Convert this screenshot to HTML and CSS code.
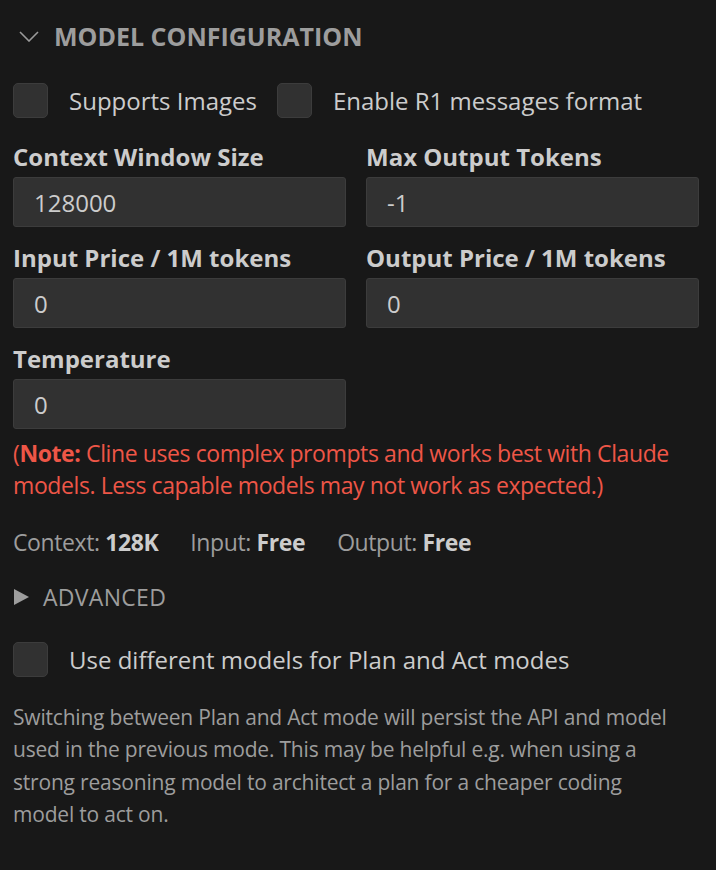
FILE: index.html
```html
<!DOCTYPE html>
<html lang="en">

<head>
    <meta charset="UTF-8">
    <meta name="viewport" content="width=device-width, initial-scale=1.0">
    <title>Model Configuration</title>
    <link rel="stylesheet" href="styles.css">
</head>

<body>
    <div class="panel">
        <div class="section-header">
            <svg class="chevron" width="20" height="11" viewBox="0 0 20 11">
                <path d="M1 1 L10 10 L19 1" fill="none" stroke="#9a9a9a" stroke-width="1.6" />
            </svg>
            <span>MODEL CONFIGURATION</span>
        </div>

        <div class="check-row">
            <label class="check"><span class="box"></span>Supports Images</label>
            <label class="check"><span class="box"></span>Enable R1 messages format</label>
        </div>

        <div class="field-grid">
            <div class="field">
                <div class="field-label">Context Window Size</div>
                <div class="input">128000</div>
            </div>
            <div class="field">
                <div class="field-label">Max Output Tokens</div>
                <div class="input">-1</div>
            </div>
            <div class="field">
                <div class="field-label">Input Price / 1M tokens</div>
                <div class="input">0</div>
            </div>
            <div class="field">
                <div class="field-label">Output Price / 1M tokens</div>
                <div class="input">0</div>
            </div>
            <div class="field">
                <div class="field-label">Temperature</div>
                <div class="input">0</div>
            </div>
        </div>

        <p class="note">(<b>Note:</b> Cline uses complex prompts and works best with Claude models. Less capable models may not work as expected.)</p>

        <div class="model-info">
            <span>Context: <b>128K</b></span>
            <span>Input: <b>Free</b></span>
            <span>Output: <b>Free</b></span>
        </div>

        <div class="advanced">
            <span class="triangle"></span>
            <span>ADVANCED</span>
        </div>

        <label class="check plan-act"><span class="box"></span>Use different models for Plan and Act modes</label>

        <p class="description">Switching between Plan and Act mode will persist the API and model used in the previous mode. This may be helpful e.g. when using a strong reasoning model to architect a plan for a cheaper coding model to act on.</p>
    </div>
</body>

</html>
```

FILE: styles.css
```css
body {
    margin: 0;
    background-color: #181818;
    color: #cccccc;
    font-family: "Open Sans", "Noto Sans", sans-serif;
    font-size: 24px;
}

.panel {
    padding: 0 17px 0 13px;
}

.section-header {
    display: flex;
    align-items: center;
    height: 72px;
    padding-left: 6px;
    color: #9d9d9d;
    font-weight: bold;
    font-size: 25px;
}

.chevron {
    margin-right: 15px;
}

.check-row {
    display: flex;
    gap: 20px;
}

.check {
    display: flex;
    align-items: center;
    height: 56px;
    color: #cccccc;
}

.box {
    width: 35px;
    height: 35px;
    box-sizing: border-box;
    background-color: #313131;
    border: 1px solid #3c3c3c;
    border-radius: 5px;
    margin-right: 21px;
}

.field-grid {
    display: grid;
    grid-template-columns: 1fr 1fr;
    column-gap: 20px;
    row-gap: 15px;
    margin-top: 13px;
}

.field-label {
    font-weight: bold;
    color: #cccccc;
    line-height: 32px;
    margin-bottom: 4px;
}

.input {
    height: 50px;
    box-sizing: border-box;
    background-color: #313131;
    border: 1px solid #3c3c3c;
    border-radius: 3px;
    padding: 0 20px;
    display: flex;
    align-items: center;
    color: #cccccc;
}

.note {
    margin: 8px 0 0;
    color: #ee5647;
    font-size: 23px;
    letter-spacing: -0.4px;
    line-height: 32px;
}

.model-info {
    display: flex;
    gap: 32px;
    margin-top: 25px;
    color: #9d9d9d;
    font-size: 23px;
    letter-spacing: -0.4px;
    line-height: 32px;
}

.model-info b {
    color: #cccccc;
}

.advanced {
    display: flex;
    align-items: center;
    margin-top: 23px;
    height: 32px;
    color: #9d9d9d;
    font-size: 23px;
    letter-spacing: 0.3px;
}

.triangle {
    width: 0;
    height: 0;
    border-top: 8px solid transparent;
    border-bottom: 8px solid transparent;
    border-left: 15px solid #9d9d9d;
    margin: 0 14px 0 1px;
}

.plan-act {
    margin-top: 18px;
}

.description {
    max-width: 672px;
    margin: 14px 0 0;
    color: #9d9d9d;
    font-size: 21px;
    letter-spacing: -0.2px;
    line-height: 32.4px;
}
```
